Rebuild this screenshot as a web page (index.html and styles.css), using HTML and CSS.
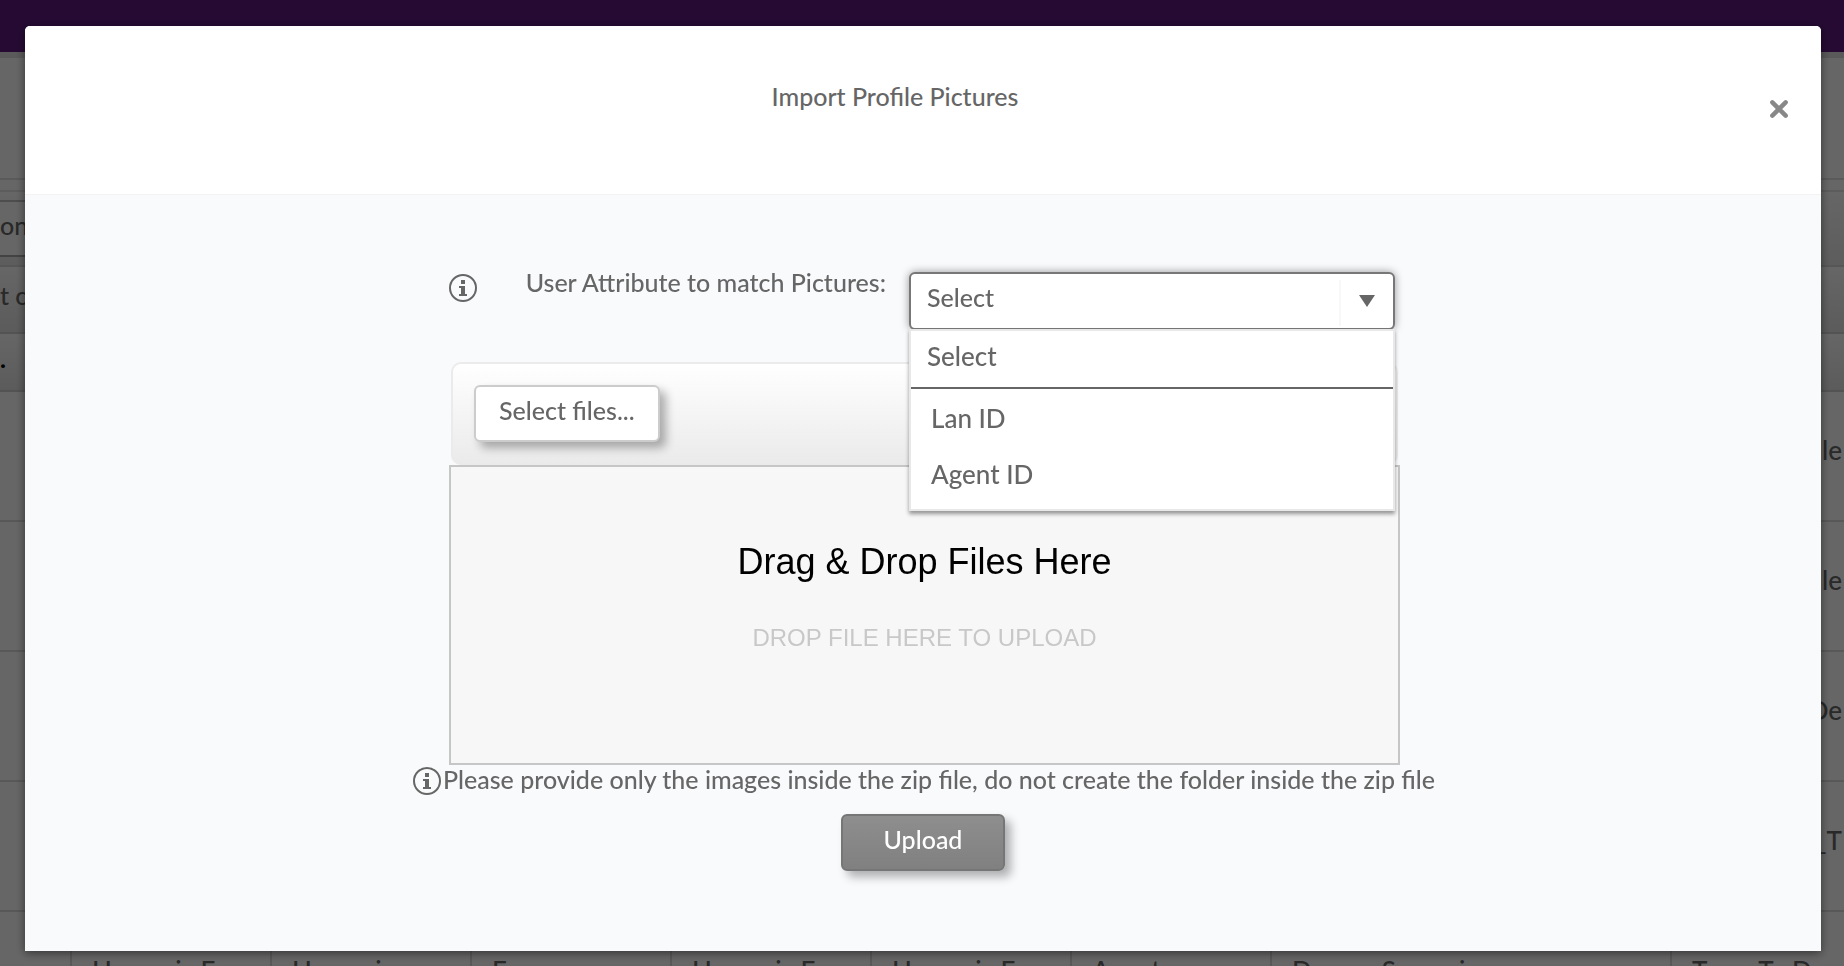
FILE: index.html
```
<!DOCTYPE html>
<html lang="en">
<head>
  <meta charset="UTF-8">
  <meta name="viewport" content="width=device-width, initial-scale=1.0">
  <title>Import Profile Pictures</title>
  <link rel="stylesheet" href="styles.css">
</head>
<body>
  <!-- page behind the dialog -->
  <div class="page">
    <div class="navbar"></div>
    <div class="page-header"></div>
    <div class="toolbar"></div>
    <div class="filter-bar"><span class="filter-box">on</span></div>
    <div class="group-bar">t c</div>
    <table class="grid">
      <colgroup>
        <col class="col-first">
        <col><col><col><col><col><col>
        <col class="col-wide">
        <col class="col-last">
      </colgroup>
      <thead>
        <tr><th>.</th><th></th><th></th><th></th><th></th><th></th><th></th><th></th><th></th></tr>
      </thead>
      <tbody>
        <tr><td></td><td></td><td></td><td></td><td></td><td></td><td></td><td></td><td class="end">le</td></tr>
        <tr><td></td><td></td><td></td><td></td><td></td><td></td><td></td><td></td><td class="end">le</td></tr>
        <tr><td></td><td></td><td></td><td></td><td></td><td></td><td></td><td></td><td class="end">De</td></tr>
        <tr><td></td><td></td><td></td><td></td><td></td><td></td><td></td><td></td><td class="end">_T</td></tr>
        <tr><td></td><td>Humanic Fr</td><td>Humanic</td><td>From</td><td>Humanic Fr</td><td>Humanic Fr</td><td>Agent</td><td>Damon Scenari</td><td>Team To D</td></tr>
      </tbody>
    </table>
  </div>

  <div class="overlay">
    <div class="modal" role="dialog" aria-labelledby="modalTitle">
      <div class="modal-header">
        <h1 id="modalTitle">Import Profile Pictures</h1>
        <button class="close-button" type="button" aria-label="Close">
          <svg width="20" height="20" viewBox="0 0 18 18"><path d="M3 3l12 12M15 3L3 15" stroke="#888" stroke-width="4" stroke-linecap="round"/></svg>
        </button>
      </div>

      <div class="modal-body">
        <div class="attribute-row">
          <svg class="info-icon" viewBox="0 0 28 28">
            <circle cx="14" cy="14" r="13" fill="none" stroke="#666" stroke-width="2"/>
            <path d="M12 6h4v4h-4zM10 12h6v8h2v2h-8v-2h2v-6h-2z" fill="#666"/>
          </svg>
          <label for="attribute">User Attribute to match Pictures:</label>
          <div class="dropdown">
            <select id="attribute" class="dropdown-select">
              <option>Select</option>
              <option>Lan ID</option>
              <option>Agent ID</option>
            </select>
            <span class="dropdown-arrow"></span>
            <ul class="dropdown-menu">
              <li class="menu-title">Select</li>
              <li>Lan ID</li>
              <li>Agent ID</li>
            </ul>
          </div>
        </div>

        <div class="upload">
          <div class="upload-bar">
            <button class="select-button" type="button">Select files...</button>
          </div>
          <div class="drop-zone">
            <h2>Drag &amp; Drop Files Here</h2>
            <p>DROP FILE HERE TO UPLOAD</p>
          </div>
        </div>

        <div class="note">
          <svg class="info-icon" viewBox="0 0 28 28">
            <circle cx="14" cy="14" r="13" fill="none" stroke="#666" stroke-width="2"/>
            <path d="M12 6h4v4h-4zM10 12h6v8h2v2h-8v-2h2v-6h-2z" fill="#666"/>
          </svg>
          <p>Please provide only the images inside the zip file, do not create the folder inside the zip file</p>
        </div>
        <button class="upload-button" type="button">Upload</button>
      </div>
    </div>
  </div>
</body>
</html>
```

FILE: styles.css
```
* {
  box-sizing: border-box;
}

body {
  margin: 0;
  height: 100vh;
  overflow: hidden;
  font-family: Lato, "Noto Sans", sans-serif;
  font-size: 25px;
  font-weight: 500;
  line-height: 32px;
  color: #666;
}

h1, h2, p, ul {
  margin: 0;
  padding: 0;
  font-size: inherit;
  font-weight: inherit;
}

button, select {
  font: inherit;
  color: inherit;
  cursor: pointer;
}

/* page behind the dialog */
.page {
  height: 100vh;
  overflow: hidden;
  background-color: #fff;
}

.navbar {
  height: 52px;
  background-color: #5f1b80;
}

.page-header {
  height: 128px;
  border-top: 6px solid #e0e0e0;
  border-bottom: 2px solid #e0e0e0;
}

.toolbar {
  height: 12px;
  border-bottom: 2px solid #e6e6e6;
}

.filter-bar {
  height: 75px;
  padding-top: 8px;
  background: linear-gradient(#fff, #e8e8e8);
  border-bottom: 2px solid #d8d8d8;
}

.filter-box {
  display: block;
  width: 180px;
  height: 57px;
  padding-top: 7px;
  background-color: #fff;
  border-top: 2px solid #c0c0c0;
  border-bottom: 2px solid #a8a8a8;
}

.group-bar {
  height: 67px;
  padding-top: 12px;
  background: linear-gradient(#fff, #e4e4e4);
  border-bottom: 2px solid #d0d0d0;
}

.grid {
  width: 100%;
  table-layout: fixed;
  border-collapse: separate;
  border-spacing: 0;
}

.grid col {
  width: 200px;
}

.grid .col-first {
  width: 72px;
}

.grid .col-wide {
  width: 400px;
}

.grid .col-last {
  width: auto;
}

.grid th {
  height: 58px;
  padding: 0 0 8px;
  text-align: left;
  color: #000;
  background: linear-gradient(#fff, #e4e4e4);
  border-bottom: 2px solid #d0d0d0;
}

.grid td {
  height: 130px;
  padding: 0 0 12px 20px;
  white-space: nowrap;
  font-size: 26px;
  border-right: 2px solid #dcdcdc;
  border-bottom: 2px solid #dcdcdc;
}

.grid td:last-child {
  border-right: none;
}

.grid .end {
  padding-right: 2px;
  text-align: right;
}

/* dialog */
.overlay {
  position: fixed;
  inset: 0;
  display: flex;
  padding: 26px 23px 15px 25px;
  background-color: rgba(0, 0, 0, 0.6);
}

.modal {
  flex: 1;
  display: flex;
  flex-direction: column;
  background-color: #f9fafc;
  border-radius: 5px 5px 0 0;
  box-shadow: 0 2px 10px rgba(0, 0, 0, 0.5);
}

.modal-header {
  display: flex;
  align-items: flex-start;
  height: 169px;
  padding: 54px 28px 0 0;
  background-color: #fff;
  border-bottom: 1px solid #f3f3f3;
  border-radius: 5px 5px 0 0;
}

.modal-header h1 {
  flex: 1;
  text-align: center;
}

.close-button {
  display: flex;
  justify-content: center;
  width: 28px;
  margin-top: 19px;
  padding: 0;
  background: none;
  border: none;
}

.modal-body {
  display: flex;
  flex-direction: column;
  align-items: center;
  padding-top: 71px;
}

.attribute-row,
.upload {
  width: 951px;
  margin-left: 3px;
}

.attribute-row {
  display: flex;
  align-items: flex-start;
}

.info-icon {
  flex: none;
  width: 28px;
  height: 28px;
}

.attribute-row .info-icon {
  margin-top: 8px;
}

.attribute-row label {
  flex: 1;
  padding-right: 23px;
  text-align: right;
}

.dropdown {
  position: relative;
  width: 486px;
  margin: 6px 5px 0 0;
}

.dropdown-select {
  display: block;
  width: 100%;
  height: 58px;
  padding: 0 0 8px 16px;
  appearance: none;
  background-color: #fff;
  border: 2px solid #777;
  border-radius: 6px;
  box-shadow: 0 0 8px rgba(0, 0, 0, 0.4);
}

.dropdown-arrow {
  position: absolute;
  top: 8px;
  right: 2px;
  display: flex;
  align-items: center;
  justify-content: center;
  width: 54px;
  height: 46px;
  padding-bottom: 4px;
  border-left: 2px solid #f8f8f8;
  pointer-events: none;
}

.dropdown-arrow::before {
  content: "";
  border: 8px solid transparent;
  border-top: 12px solid #666;
  border-bottom: none;
}

.dropdown-menu {
  position: absolute;
  top: 57px;
  left: 0;
  z-index: 1;
  width: 100%;
  padding-bottom: 8px;
  list-style: none;
  font-size: 26px;
  background-color: #fff;
  border: 2px solid #e8e8e8;
  box-shadow: 0 3px 4px rgba(0, 0, 0, 0.4);
}

.dropdown-menu li {
  height: 56px;
  padding: 13px 20px 0;
}

.dropdown-menu .menu-title {
  height: 58px;
  padding: 9px 16px 0;
  border-bottom: 2px solid #666;
}

.upload {
  margin-top: 32px;
}

.upload-bar {
  height: 103px;
  margin: 0 2px;
  padding: 21px;
  background: linear-gradient(#fff, #eaeaea);
  border: 2px solid #ebebeb;
  border-bottom: none;
  border-radius: 10px;
}

.select-button {
  height: 57px;
  padding: 0 23px 8px;
  background-color: #fff;
  border: 2px solid #ccc;
  border-radius: 6px;
  box-shadow: 6px 6px 10px rgba(0, 0, 0, 0.3);
}

.drop-zone {
  height: 300px;
  padding-top: 73px;
  text-align: center;
  font-family: "Liberation Sans", Arial, sans-serif;
  background-color: #f7f7f7;
  border: 2px solid #c6c6c6;
}

.drop-zone h2 {
  font-size: 36px;
  line-height: 44px;
  color: #000;
}

.drop-zone p {
  margin-top: 38px;
  font-size: 24px;
  color: #c8c8c8;
}

.note {
  display: flex;
  align-items: flex-start;
  gap: 2px;
  margin-left: 2px;
}

.note .info-icon {
  margin-top: 2px;
}

.note p {
  line-height: 28px;
}

.upload-button {
  width: 164px;
  height: 57px;
  margin-top: 19px;
  padding: 0 0 8px;
  color: #fff;
  background: linear-gradient(#8e8e8e, #808080);
  border: 2px solid #767676;
  border-radius: 6px;
  box-shadow: 6px 6px 10px rgba(0, 0, 0, 0.3);
}
```
